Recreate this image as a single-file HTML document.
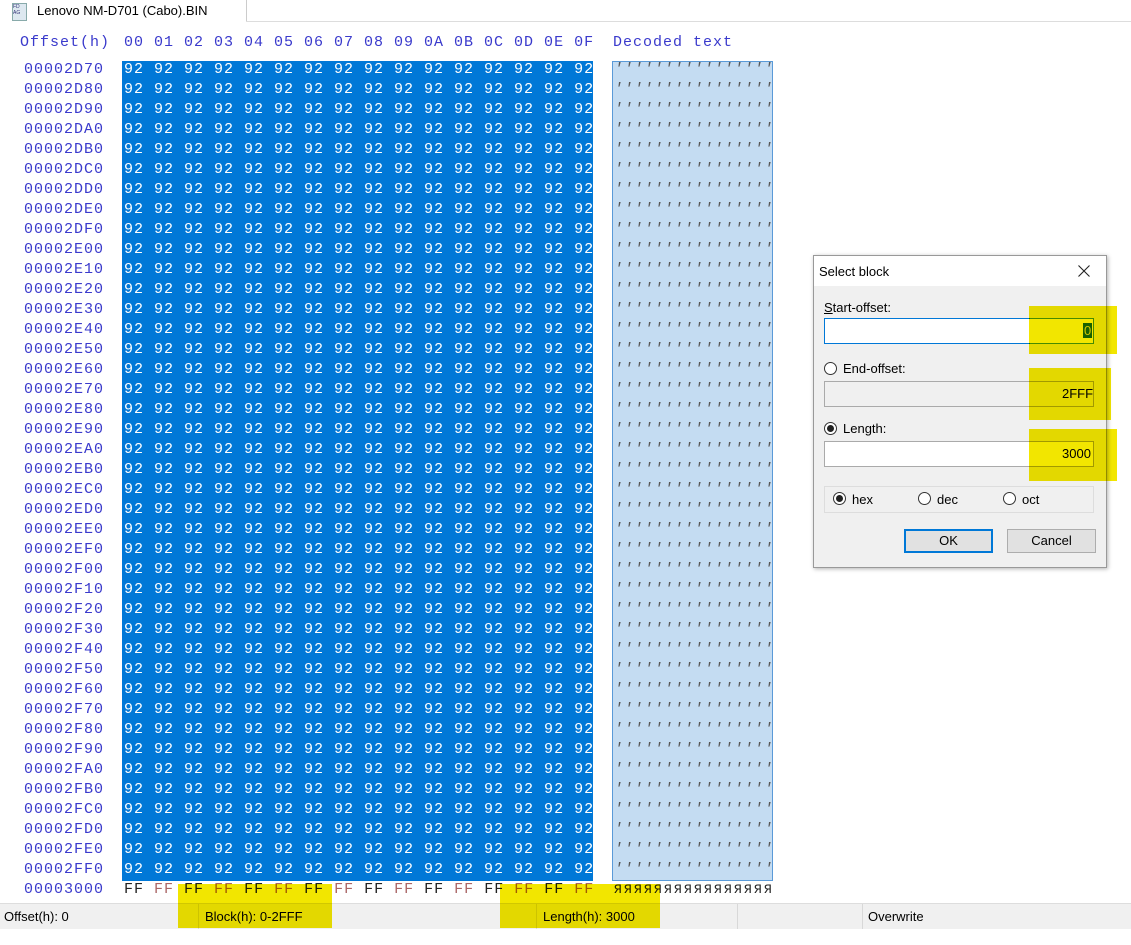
<!DOCTYPE html>
<html><head><meta charset="utf-8"><style>
body{margin:0;width:1131px;height:945px;background:#fff;position:relative;overflow:hidden;font-family:"Liberation Sans",sans-serif}
.tab{position:absolute;left:0;top:0;width:246px;height:22px;border-right:1px solid #ccc;background:#fff;font-size:13px}
.tabline{position:absolute;left:246px;top:21px;width:885px;height:1px;background:#ddd}
.mono{font-family:"Liberation Mono",monospace;font-size:15px;letter-spacing:1px;white-space:pre;position:absolute;line-height:20px}
.off{left:24px;top:60px;color:#3a3acc}
.hdr{top:33px;color:#3a3acc}
.sel{position:absolute;left:122px;top:61px;width:471px;height:820px;background:#0078d7}
.hex{left:124px;top:60px;color:#fff}
.dec{position:absolute;left:612px;top:61px;width:159px;height:818px;background:#c4dcf2;border:1px solid #5a9ad8}
.dtxt{left:614px;top:60px;color:#555;font-style:italic}
.status{position:absolute;left:0;top:903px;width:1131px;height:25px;background:#f0f0f0;border-top:1px solid #ddd;font-size:13px}
.status span{position:absolute;top:5px}
.sep{position:absolute;top:0;width:1px;height:25px;background:#d8d8d8}
.hl{position:absolute;background:#f2e600;mix-blend-mode:multiply}
.dlg{position:absolute;left:813px;top:255px;width:292px;height:311px;background:#f0f0f0;border:1px solid #999;box-shadow:1px 1px 4px rgba(0,0,0,.3);font-size:13px}
.tb{position:absolute;left:0;top:0;width:292px;height:30px;background:#fff}
.in{position:absolute;left:10px;width:270px;height:26px;border:1px solid #aaa;background:#fff;box-sizing:border-box}
.rad{position:absolute;width:13px;height:13px;border:1px solid #333;border-radius:50%;background:#fff;box-sizing:border-box}
.rad.on::after{content:"";position:absolute;left:2px;top:2px;width:7px;height:7px;border-radius:50%;background:#222}
.btn{position:absolute;top:273px;width:89px;height:24px;background:#e1e1e1;border:1px solid #adadad;box-sizing:border-box;text-align:center;line-height:22px}
</style></head><body>
<div class="tab"><div style="position:absolute;left:12px;top:3px;width:13px;height:16px;background:#dde8f0;border:1px solid #8aa;font-size:5px;color:#337;line-height:6px">FD<br>AG</div><span style="position:absolute;left:37px;top:3px">Lenovo NM-D701 (Cabo).BIN</span></div>
<div class="tabline"></div>
<div class="mono hdr" style="left:20px">Offset(h)</div>
<div class="mono hdr" style="left:124px">00 01 02 03 04 05 06 07 08 09 0A 0B 0C 0D 0E 0F</div>
<div class="mono hdr" style="left:613px">Decoded text</div>
<div class="sel"></div>
<div class="dec"></div>
<div class="mono off">00002D70
00002D80
00002D90
00002DA0
00002DB0
00002DC0
00002DD0
00002DE0
00002DF0
00002E00
00002E10
00002E20
00002E30
00002E40
00002E50
00002E60
00002E70
00002E80
00002E90
00002EA0
00002EB0
00002EC0
00002ED0
00002EE0
00002EF0
00002F00
00002F10
00002F20
00002F30
00002F40
00002F50
00002F60
00002F70
00002F80
00002F90
00002FA0
00002FB0
00002FC0
00002FD0
00002FE0
00002FF0
00003000</div>
<div class="mono hex">92 92 92 92 92 92 92 92 92 92 92 92 92 92 92 92
92 92 92 92 92 92 92 92 92 92 92 92 92 92 92 92
92 92 92 92 92 92 92 92 92 92 92 92 92 92 92 92
92 92 92 92 92 92 92 92 92 92 92 92 92 92 92 92
92 92 92 92 92 92 92 92 92 92 92 92 92 92 92 92
92 92 92 92 92 92 92 92 92 92 92 92 92 92 92 92
92 92 92 92 92 92 92 92 92 92 92 92 92 92 92 92
92 92 92 92 92 92 92 92 92 92 92 92 92 92 92 92
92 92 92 92 92 92 92 92 92 92 92 92 92 92 92 92
92 92 92 92 92 92 92 92 92 92 92 92 92 92 92 92
92 92 92 92 92 92 92 92 92 92 92 92 92 92 92 92
92 92 92 92 92 92 92 92 92 92 92 92 92 92 92 92
92 92 92 92 92 92 92 92 92 92 92 92 92 92 92 92
92 92 92 92 92 92 92 92 92 92 92 92 92 92 92 92
92 92 92 92 92 92 92 92 92 92 92 92 92 92 92 92
92 92 92 92 92 92 92 92 92 92 92 92 92 92 92 92
92 92 92 92 92 92 92 92 92 92 92 92 92 92 92 92
92 92 92 92 92 92 92 92 92 92 92 92 92 92 92 92
92 92 92 92 92 92 92 92 92 92 92 92 92 92 92 92
92 92 92 92 92 92 92 92 92 92 92 92 92 92 92 92
92 92 92 92 92 92 92 92 92 92 92 92 92 92 92 92
92 92 92 92 92 92 92 92 92 92 92 92 92 92 92 92
92 92 92 92 92 92 92 92 92 92 92 92 92 92 92 92
92 92 92 92 92 92 92 92 92 92 92 92 92 92 92 92
92 92 92 92 92 92 92 92 92 92 92 92 92 92 92 92
92 92 92 92 92 92 92 92 92 92 92 92 92 92 92 92
92 92 92 92 92 92 92 92 92 92 92 92 92 92 92 92
92 92 92 92 92 92 92 92 92 92 92 92 92 92 92 92
92 92 92 92 92 92 92 92 92 92 92 92 92 92 92 92
92 92 92 92 92 92 92 92 92 92 92 92 92 92 92 92
92 92 92 92 92 92 92 92 92 92 92 92 92 92 92 92
92 92 92 92 92 92 92 92 92 92 92 92 92 92 92 92
92 92 92 92 92 92 92 92 92 92 92 92 92 92 92 92
92 92 92 92 92 92 92 92 92 92 92 92 92 92 92 92
92 92 92 92 92 92 92 92 92 92 92 92 92 92 92 92
92 92 92 92 92 92 92 92 92 92 92 92 92 92 92 92
92 92 92 92 92 92 92 92 92 92 92 92 92 92 92 92
92 92 92 92 92 92 92 92 92 92 92 92 92 92 92 92
92 92 92 92 92 92 92 92 92 92 92 92 92 92 92 92
92 92 92 92 92 92 92 92 92 92 92 92 92 92 92 92
92 92 92 92 92 92 92 92 92 92 92 92 92 92 92 92
<span style="color:#222">FF <span style="color:#a66">FF</span> FF <span style="color:#a66">FF</span> FF <span style="color:#a66">FF</span> FF <span style="color:#a66">FF</span> FF <span style="color:#a66">FF</span> FF <span style="color:#a66">FF</span> FF <span style="color:#a66">FF</span> FF <span style="color:#a66">FF</span></span></div>
<div class="mono dtxt">''''''''''''''''
''''''''''''''''
''''''''''''''''
''''''''''''''''
''''''''''''''''
''''''''''''''''
''''''''''''''''
''''''''''''''''
''''''''''''''''
''''''''''''''''
''''''''''''''''
''''''''''''''''
''''''''''''''''
''''''''''''''''
''''''''''''''''
''''''''''''''''
''''''''''''''''
''''''''''''''''
''''''''''''''''
''''''''''''''''
''''''''''''''''
''''''''''''''''
''''''''''''''''
''''''''''''''''
''''''''''''''''
''''''''''''''''
''''''''''''''''
''''''''''''''''
''''''''''''''''
''''''''''''''''
''''''''''''''''
''''''''''''''''
''''''''''''''''
''''''''''''''''
''''''''''''''''
''''''''''''''''
''''''''''''''''
''''''''''''''''
''''''''''''''''
''''''''''''''''
''''''''''''''''
<span style="color:#222;font-style:normal;font-size:13px;letter-spacing:2.2px">ЯЯЯЯЯЯЯЯЯЯЯЯЯЯЯЯ</span></div>
<div class="status">
<span style="left:4px">Offset(h): 0</span>
<div class="sep" style="left:198px"></div>
<span style="left:205px">Block(h): 0-2FFF</span>
<div class="sep" style="left:536px"></div>
<span style="left:543px">Length(h): 3000</span>
<div class="sep" style="left:737px"></div>
<div class="sep" style="left:862px"></div>
<span style="left:868px">Overwrite</span>
</div>
<div class="hl" style="left:178px;top:884px;width:154px;height:44px"></div>
<div class="hl" style="left:500px;top:884px;width:160px;height:44px"></div>
<div class="dlg">
<div class="tb"><span style="position:absolute;left:5px;top:8px">Select block</span><svg style="position:absolute;left:264px;top:9px" width="12" height="12"><path d="M0.5 0.5L11.5 11.5M11.5 0.5L0.5 11.5" stroke="#222" stroke-width="1.1"/></svg></div>
<span style="position:absolute;left:10px;top:44px"><u>S</u>tart-offset:</span>
<div class="in" style="top:62px;border-color:#0078d7"></div>
<span style="position:absolute;left:29px;top:105px">End-offset:</span>
<div class="rad" style="left:10px;top:106px"></div>
<div class="in" style="top:125px;background:#f0f0f0"></div>
<span style="position:absolute;left:29px;top:165px">Length:</span>
<div class="rad on" style="left:10px;top:166px"></div>
<div class="in" style="top:185px"></div>
<div style="position:absolute;left:216px;top:62px;width:64px;height:26px;border:1px solid #4a9a30;border-left:none;box-sizing:border-box"></div>
<span style="position:absolute;left:269px;top:67px;background:#1a6a1a;color:#ddd;padding:0 1px">0</span>
<span style="position:absolute;left:248px;top:130px">2FFF</span>
<span style="position:absolute;left:248px;top:190px">3000</span>
<div class="hl" style="left:215px;top:50px;width:88px;height:48px"></div>
<div class="hl" style="left:215px;top:112px;width:82px;height:52px"></div>
<div class="hl" style="left:215px;top:173px;width:88px;height:52px"></div>
<div style="position:absolute;left:10px;top:230px;width:270px;height:27px;border:1px solid #ddd;box-sizing:border-box"></div>
<div class="rad on" style="left:19px;top:236px"></div><span style="position:absolute;left:38px;top:236px">hex</span>
<div class="rad" style="left:104px;top:236px"></div><span style="position:absolute;left:123px;top:236px">dec</span>
<div class="rad" style="left:189px;top:236px"></div><span style="position:absolute;left:208px;top:236px">oct</span>
<div class="btn" style="left:90px;border:2px solid #0078d7;line-height:20px">OK</div>
<div class="btn" style="left:193px">Cancel</div>
</div>
</body></html>
